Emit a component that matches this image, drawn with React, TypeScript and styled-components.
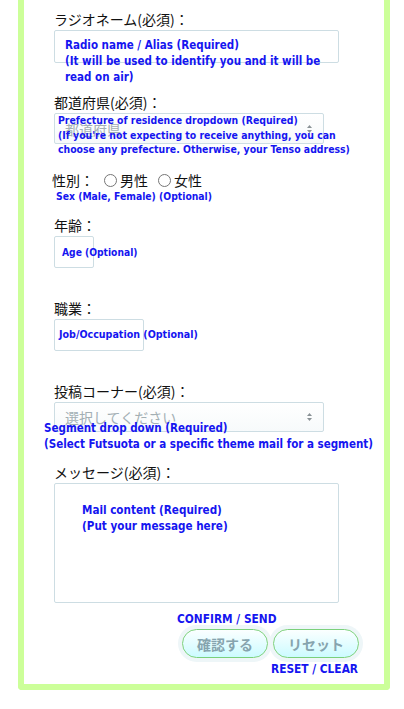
import React from "react";
import styled, { createGlobalStyle } from "styled-components";

const Global = createGlobalStyle`
  html, body { margin: 0; padding: 0; background: #ffffff; }
  body { font-family: "Noto Sans CJK JP", "Noto Sans", sans-serif; }
`;

const Card = styled.div`
  margin: 0 14px 0 18px;
  border: 6px solid #ccff99;
  border-top: none;
  border-radius: 0 0 4px 4px;
  padding: 9px 0 8px 30px;
  background: #fff;
`;

const Field = styled.div<{ $mt?: number }>`
  position: relative;
  margin-top: ${(p) => p.$mt ?? 0}px;
`;

const Label = styled.div`
  font-size: 14px;
  line-height: 20px;
  color: #111;
  height: 20px;
  white-space: nowrap;
`;

const TextBox = styled.div<{ $w: number; $h: number }>`
  box-sizing: border-box;
  width: ${(p) => p.$w}px;
  height: ${(p) => p.$h}px;
  border: 1px solid #cddde3;
  border-radius: 2px;
  margin-top: 1px;
  background: #fff;
`;

const Select = styled.div<{ $w: number; $h: number }>`
  box-sizing: border-box;
  width: ${(p) => p.$w}px;
  height: ${(p) => p.$h}px;
  border: 1px solid #cddde3;
  border-radius: 2px;
  margin-top: 1px;
  background: linear-gradient(#ffffff, #f7fafb);
  display: flex;
  align-items: center;
  justify-content: space-between;
  padding: 0 10px;
  font-size: 14px;
  color: #a3afb4;
`;

const Arrows = styled.svg`
  width: 7px;
  height: 10px;
  display: block;
`;

const Note = styled.div<{ $top: number; $left: number; $lh?: number; $size?: number }>`
  position: absolute;
  top: ${(p) => p.$top}px;
  left: ${(p) => p.$left}px;
  font-family: "DejaVu Sans Condensed", "DejaVu Sans", sans-serif;
  font-weight: bold;
  font-size: ${(p) => p.$size ?? 11.5}px;
  line-height: ${(p) => p.$lh ?? 16}px;
  color: #1515f0;
  white-space: nowrap;
`;

const InlineNote = styled.div`
  font-family: "DejaVu Sans Condensed", "DejaVu Sans", sans-serif;
  font-weight: bold;
  font-size: 10.3px;
  line-height: 13px;
  color: #1515f0;
  margin-left: 2px;
  white-space: nowrap;
`;

const RadioRow = styled.div`
  display: flex;
  align-items: center;
  height: 20px;
  font-size: 14px;
  line-height: 20px;
  color: #111;
  margin-left: -2px;
`;

const RadioLabel = styled.span`
  display: inline-flex;
  align-items: center;
  gap: 3px;
  margin-left: 10px;
`;

const Radio = styled.span`
  display: inline-block;
  box-sizing: border-box;
  width: 13px;
  height: 13px;
  border: 1px solid #767676;
  border-radius: 50%;
  background: #fff;
`;

const Actions = styled.div`
  margin-top: 9px;
  padding-left: 123px;
`;

const ActionNote = styled.div<{ $ml: number; $mt?: number }>`
  font-family: "DejaVu Sans Condensed", "DejaVu Sans", sans-serif;
  font-weight: bold;
  font-size: 11.8px;
  line-height: 14px;
  color: #1515f0;
  margin-left: ${(p) => p.$ml}px;
  margin-top: ${(p) => p.$mt ?? 0}px;
  white-space: nowrap;
`;

const Buttons = styled.div`
  display: flex;
  gap: 5px;
  margin-top: 3px;
  margin-left: 5px;
`;

const Button = styled.button`
  box-sizing: border-box;
  width: 86px;
  height: 29px;
  border: 1.5px solid #7bd07b;
  border-radius: 15px;
  background: linear-gradient(#fbffff, #ccfbff);
  box-shadow: 0 0 0 4px #eef6f8;
  font-family: "Noto Sans CJK JP", sans-serif;
  font-weight: bold;
  font-size: 14px;
  color: #86a4ae;
  padding: 0;
  cursor: pointer;
`;

const ArrowIcon = () => (
  <Arrows viewBox="0 0 7 10">
    <path d="M3.5 1 L6 4 H1 Z" fill="#8a9296" />
    <path d="M3.5 9 L6 6 H1 Z" fill="#8a9296" />
  </Arrows>
);

export default function App() {
  return (
    <>
      <Global />
      <Card>
        <Field>
          <Label>ラジオネーム(必須)：</Label>
          <TextBox $w={285} $h={33} />
          <Note $top={28} $left={11}>
            Radio name / Alias (Required)
            <br />
            (It will be used to identify you and it will be
            <br />
            read on air)
          </Note>
        </Field>

        <Field $mt={29}>
          <Label>都道府県(必須)：</Label>
          <Select $w={270} $h={31}>
            <span>都道府県</span>
            <ArrowIcon />
          </Select>
          <Note $top={21} $left={4} $lh={14.5} $size={10.4}>
            Prefecture of residence dropdown (Required)
            <br />
            (If you're not expecting to receive anything, you can
            <br />
            choose any prefecture. Otherwise, your Tenso address)
          </Note>
        </Field>

        <Field $mt={26}>
          <RadioRow>
            性別：
            <RadioLabel>
              <Radio />
              男性
            </RadioLabel>
            <RadioLabel>
              <Radio />
              女性
            </RadioLabel>
          </RadioRow>
          <InlineNote>Sex (Male, Female) (Optional)</InlineNote>
        </Field>

        <Field $mt={12}>
          <Label>年齢：</Label>
          <TextBox $w={40} $h={32} />
          <Note $top={30} $left={8} $size={10.2}>
            Age (Optional)
          </Note>
        </Field>

        <Field $mt={30}>
          <Label>職業：</Label>
          <TextBox $w={90} $h={32} />
          <Note $top={28} $left={5} $size={10.6}>
            Job/Occupation (Optional)
          </Note>
        </Field>

        <Field $mt={30}>
          <Label>投稿コーナー(必須)：</Label>
          <Select $w={270} $h={30}>
            <span>選択してください</span>
            <ArrowIcon />
          </Select>
          <Note $top={39} $left={-10} $lh={16} $size={11.5}>
            Segment drop down (Required)
            <br />
            (Select Futsuota or a specific theme mail for a segment)
          </Note>
        </Field>

        <Field $mt={30}>
          <Label>メッセージ(必須)：</Label>
          <TextBox $w={285} $h={120} />
          <Note $top={40} $left={28} $size={11.6}>
            Mail content (Required)
            <br />
            (Put your message here)
          </Note>
        </Field>

        <Actions>
          <ActionNote $ml={0}>CONFIRM / SEND</ActionNote>
          <Buttons>
            <Button type="button">確認する</Button>
            <Button type="button">リセット</Button>
          </Buttons>
          <ActionNote $ml={94} $mt={4}>
            RESET / CLEAR
          </ActionNote>
        </Actions>
      </Card>
    </>
  );
}
